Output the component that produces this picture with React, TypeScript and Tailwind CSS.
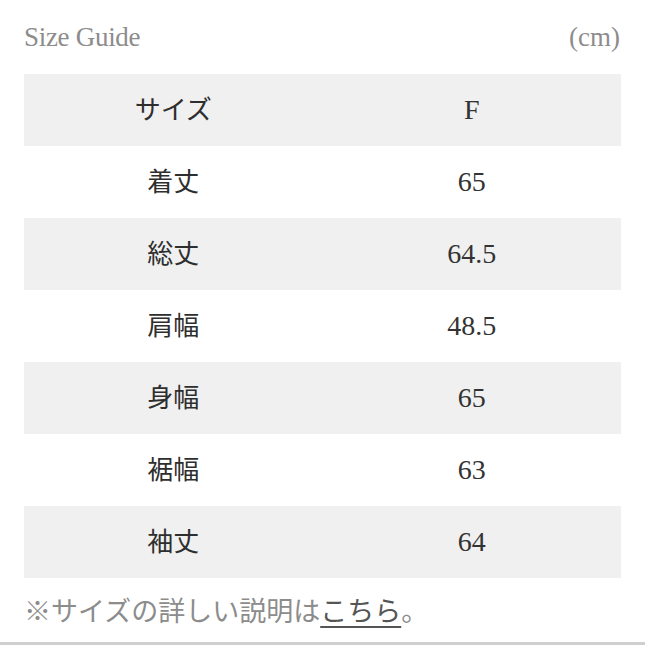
const rows: [string, string][] = [
  ["サイズ", "F"],
  ["着丈", "65"],
  ["総丈", "64.5"],
  ["肩幅", "48.5"],
  ["身幅", "65"],
  ["裾幅", "63"],
  ["袖丈", "64"],
];

const serif = "font-['Liberation_Serif','Noto_Sans_CJK_JP',serif]";
const sans = "font-['Liberation_Sans','Noto_Sans_CJK_JP',sans-serif]";

export default function App() {
  return (
    <div className="h-[645px] w-[645px] overflow-hidden bg-white">
      <div className="flex h-[642px] flex-col px-6">
        <div className={`flex h-[74px] items-start justify-between pt-[20px] text-[27px] leading-[34px] text-[#8c8c8c] ${serif}`}>
          <span className="tracking-[-0.3px]">Size Guide</span>
          <span className="pr-[1px]">(cm)</span>
        </div>
        <div className="flex flex-col">
          {rows.map(([label, value], i) => (
            <div
              key={label}
              className={`grid h-[72px] grid-cols-2 items-center ${i % 2 === 0 ? "bg-[#f0f0f0]" : "bg-white"}`}
            >
              <div className={`text-center text-[26px] text-[#2e2e2e] ${sans}`}>{label}</div>
              <div className={`text-center text-[28px] text-[#333] ${serif}`}>{value}</div>
            </div>
          ))}
        </div>
        <div className={`flex flex-1 items-center text-[27px] text-[#8c8c8c] ${sans}`}>
          <span className="pt-[4px]">
            ※サイズの詳しい説明は
            <span className="text-[#555] underline decoration-[2px] underline-offset-[5px]">こちら</span>。
          </span>
        </div>
      </div>
      <div className="h-[3px] bg-[#cfcfcf]" />
    </div>
  );
}
